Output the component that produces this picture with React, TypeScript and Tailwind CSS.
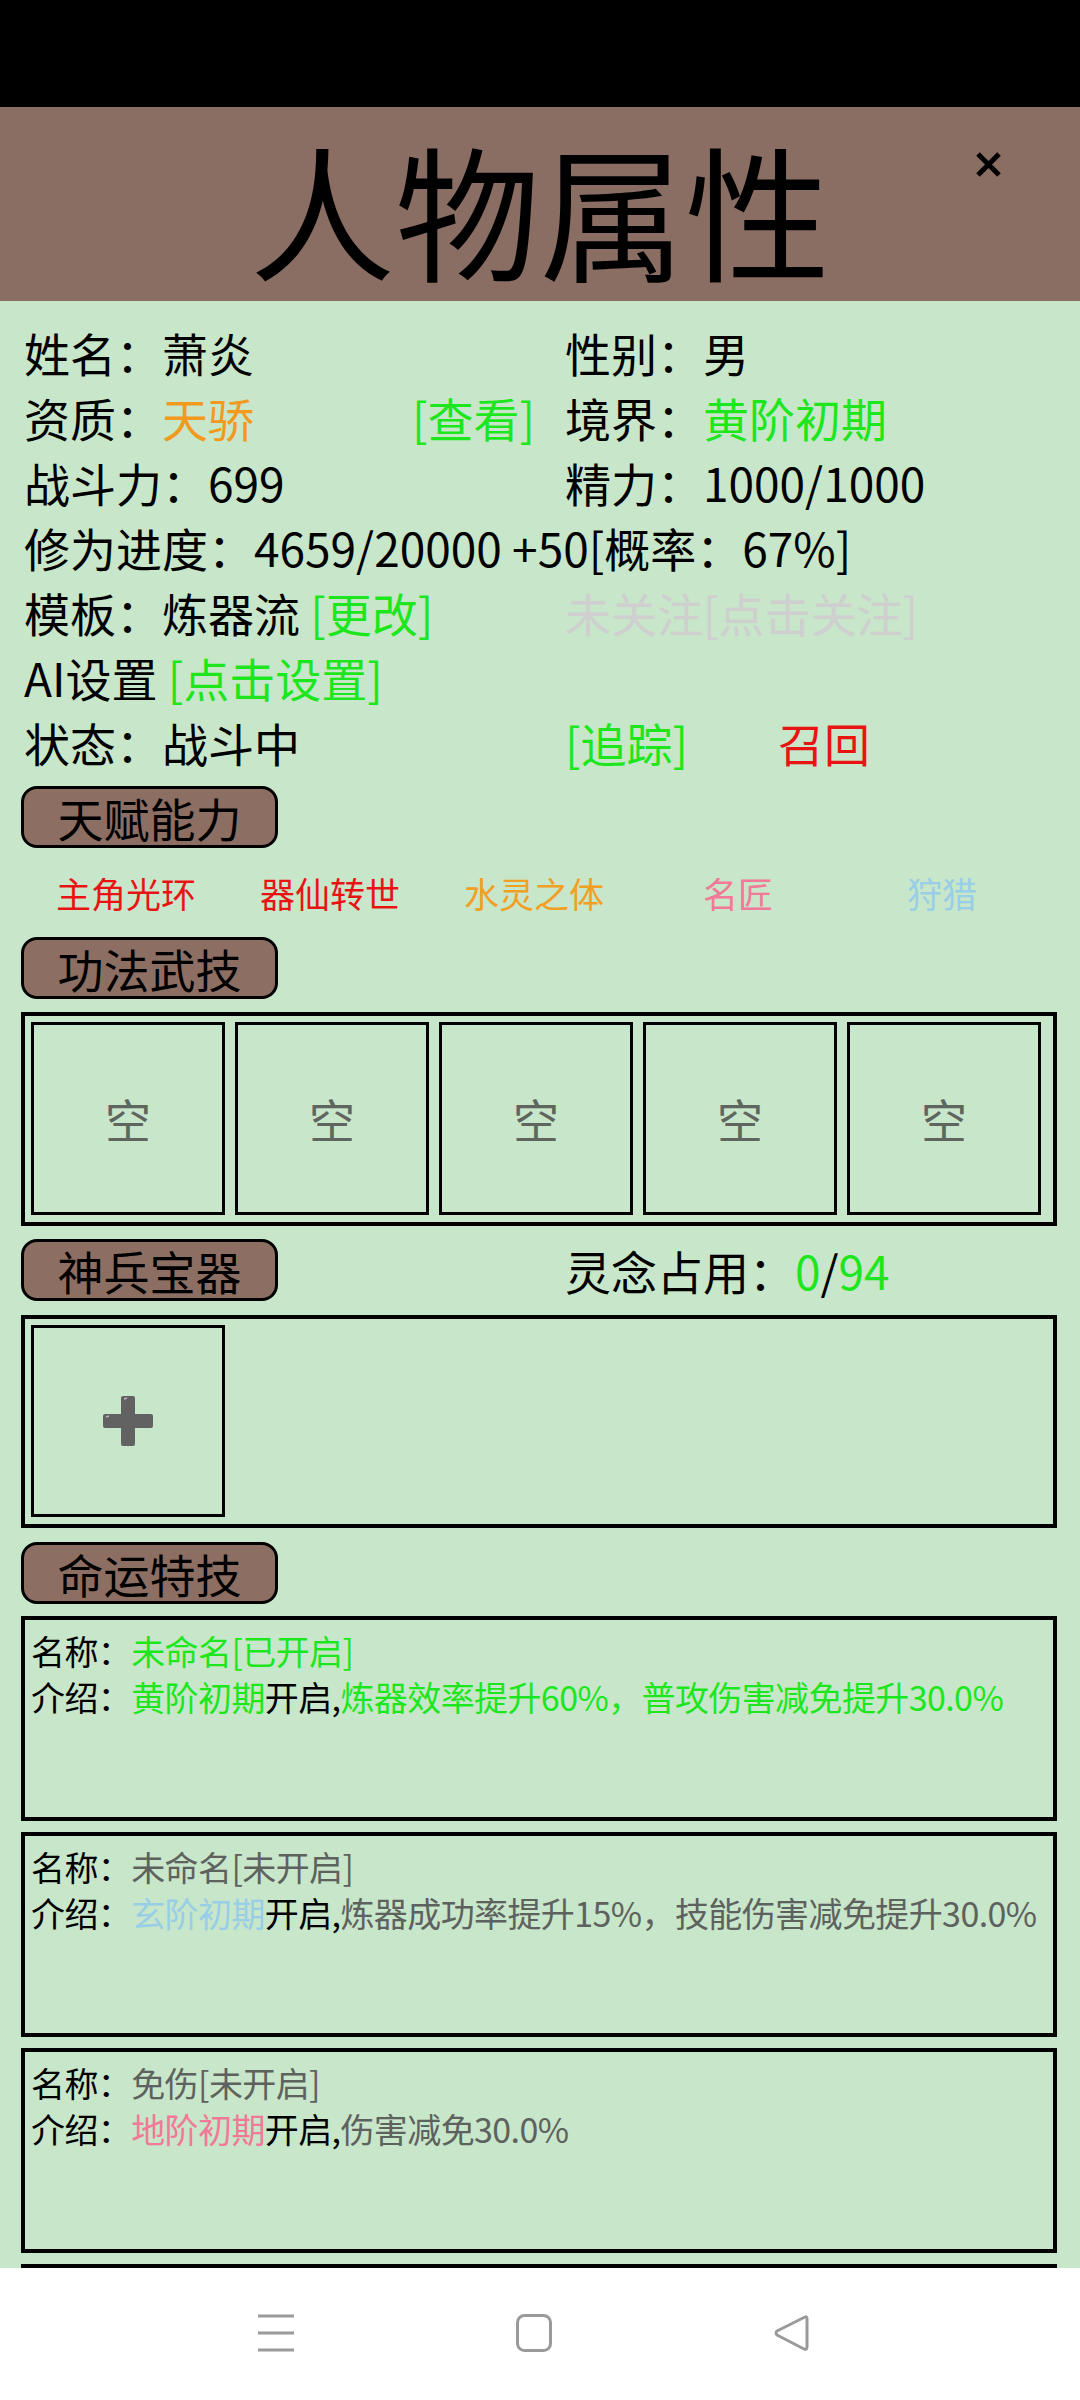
const green = "text-[#1ee61e]";

function Badge({ label }: { label: string }) {
  return (
    <div className="w-[257px] h-[62px] shrink-0 rounded-[16px] border-[3px] border-black bg-[#8d6e63] flex items-center justify-center text-[46px] leading-none text-black">
      {label}
    </div>
  );
}

function Cell({ children }: { children?: React.ReactNode }) {
  return (
    <div className="w-[194px] h-[193px] shrink-0 border-[3px] border-black flex items-center justify-center text-[46px] text-[#5f665f]">
      {children}
    </div>
  );
}

function PlusIcon() {
  return (
    <svg width="54" height="54" viewBox="0 0 54 54">
      <path d="M22 2 h10 a2 2 0 0 1 2 2 v16 h16 a2 2 0 0 1 2 2 v10 a2 2 0 0 1 -2 2 h-16 v16 a2 2 0 0 1 -2 2 h-10 a2 2 0 0 1 -2 -2 v-16 h-16 a2 2 0 0 1 -2 -2 v-10 a2 2 0 0 1 2 -2 h16 v-16 a2 2 0 0 1 2 -2 z" fill="#626262" />
      <path d="M23 5 l3 -1" stroke="#b8b8b8" strokeWidth="1.5" />
      <path d="M5 23 l3 -1" stroke="#b8b8b8" strokeWidth="1.5" />
    </svg>
  );
}

type Seg = { t: string; c?: string };

function FateCard({ name, intro }: { name: Seg; intro: Seg[] }) {
  return (
    <div className="h-[205px] shrink-0 border-[4px] border-black pl-[6px] pt-[8px] text-[34px] leading-[46px] tracking-[-0.6px] whitespace-nowrap text-black">
      <div>
        名称：<span className={name.c}>{name.t}</span>
      </div>
      <div>
        介绍：
        {intro.map((s, i) => (
          <span key={i} className={s.c}>
            {s.t}
          </span>
        ))}
      </div>
    </div>
  );
}

export default function App() {
  const talents = [
    { t: "主角光环", c: "text-[#e81414]" },
    { t: "器仙转世", c: "text-[#e81414]" },
    { t: "水灵之体", c: "text-[#f0a024]" },
    { t: "名匠", c: "text-[#f07a98]" },
    { t: "狩猎", c: "text-[#98cfe6]" },
  ];
  const gray = "text-[#5e625e]";

  return (
    <div
      className="w-[1080px] h-[2400px] flex flex-col overflow-hidden bg-[#c8e6c9]"
      style={{ fontFamily: '"Noto Sans CJK SC", "Noto Sans", sans-serif' }}
    >
      <div className="h-[107px] bg-black shrink-0" />

      <div className="h-[194px] shrink-0 bg-[#8b6e63] relative flex items-center justify-center pt-[8px]">
        <span className="text-[145px] leading-none text-black">人物属性</span>
        <svg className="absolute left-[975px] top-[44px]" width="27" height="27" viewBox="0 0 27 27">
          <path d="M3 3 L24 24 M24 3 L3 24" stroke="#000" strokeWidth="5" />
        </svg>
      </div>

      <div className="flex-1 overflow-hidden pl-[21px] pr-[23px] pt-[19px]">
        <div className="pl-[3px] text-[46px] leading-[65px] text-black whitespace-nowrap">
          <div className="grid grid-cols-[541px_1fr]">
            <div>姓名：萧炎</div>
            <div>性别：男</div>
          </div>
          <div className="grid grid-cols-[541px_1fr]">
            <div className="flex">
              <span className="w-[388px]">
                资质：<span className="text-[#f29a1d]">天骄</span>
              </span>
              <span className={green}>[查看]</span>
            </div>
            <div>
              境界：<span className={green}>黄阶初期</span>
            </div>
          </div>
          <div className="grid grid-cols-[541px_1fr]">
            <div>战斗力：699</div>
            <div>精力：1000/1000</div>
          </div>
          <div>修为进度：4659/20000 +50[概率：67%]</div>
          <div className="grid grid-cols-[541px_1fr]">
            <div>
              模板：炼器流 <span className={green}>[更改]</span>
            </div>
            <div className="text-[#cfcfcf]">未关注[点击关注]</div>
          </div>
          <div>
            AI设置 <span className={green}>[点击设置]</span>
          </div>
          <div className="grid grid-cols-[541px_1fr]">
            <div>状态：战斗中</div>
            <div className="flex">
              <span className={`${green} w-[213px]`}>[追踪]</span>
              <span className="text-[#e81414]">召回</span>
            </div>
          </div>
        </div>

        <div className="mt-[11px]">
          <Badge label="天赋能力" />
        </div>
        <div className="h-[89px] w-[1020px] ml-[3px] grid grid-cols-5 items-center text-[35px] leading-none">
          {talents.map((x) => (
            <div key={x.t} className={`text-center ${x.c}`}>
              {x.t}
            </div>
          ))}
        </div>

        <Badge label="功法武技" />
        <div className="mt-[13px] h-[214px] border-[4px] border-black p-[6px] flex gap-[10px]">
          {[0, 1, 2, 3, 4].map((i) => (
            <Cell key={i}>空</Cell>
          ))}
        </div>

        <div className="mt-[13px] flex items-center">
          <Badge label="神兵宝器" />
          <div className="ml-[287px] text-[46px] leading-none text-black">
            灵念占用：<span className={green}>0</span>/<span className={green}>94</span>
          </div>
        </div>
        <div className="mt-[14px] h-[213px] border-[4px] border-black p-[6px] flex">
          <div className="w-[194px] h-[192px] border-[3px] border-black flex items-center justify-center">
            <PlusIcon />
          </div>
        </div>

        <div className="mt-[14px]">
          <Badge label="命运特技" />
        </div>

        <div className="mt-[12px] flex flex-col gap-[11px]">
          <FateCard
            name={{ t: "未命名[已开启]", c: green }}
            intro={[
              { t: "黄阶初期", c: green },
              { t: "开启," },
              { t: "炼器效率提升60%，普攻伤害减免提升30.0%", c: green },
            ]}
          />
          <FateCard
            name={{ t: "未命名[未开启]", c: gray }}
            intro={[
              { t: "玄阶初期", c: "text-[#98cfe6]" },
              { t: "开启," },
              { t: "炼器成功率提升15%，技能伤害减免提升30.0%", c: gray },
            ]}
          />
          <FateCard
            name={{ t: "免伤[未开启]", c: gray }}
            intro={[
              { t: "地阶初期", c: "text-[#f07a98]" },
              { t: "开启," },
              { t: "伤害减免30.0%", c: gray },
            ]}
          />
          <div className="h-[205px] shrink-0 border-[4px] border-black" />
        </div>
      </div>

      <div className="h-[132px] shrink-0 bg-white flex items-center justify-center gap-[221px] pr-[14px] pb-[2px]">
        <svg width="38" height="38" viewBox="0 0 38 38">
          <path d="M1 2 H37 M1 19 H37 M1 36 H37" stroke="#9a9a9a" strokeWidth="3" />
        </svg>
        <svg width="36" height="38" viewBox="0 0 36 38">
          <rect x="1.5" y="1.5" width="33" height="35" rx="7" fill="none" stroke="#9a9a9a" strokeWidth="3" />
        </svg>
        <svg width="36" height="38" viewBox="0 0 36 38">
          <path d="M32 3 Q34 2 34 5 V33 Q34 36 31 35 L4 21 Q2 19 4 17 Z" fill="none" stroke="#9a9a9a" strokeWidth="3" strokeLinejoin="round" />
        </svg>
      </div>
    </div>
  );
}
